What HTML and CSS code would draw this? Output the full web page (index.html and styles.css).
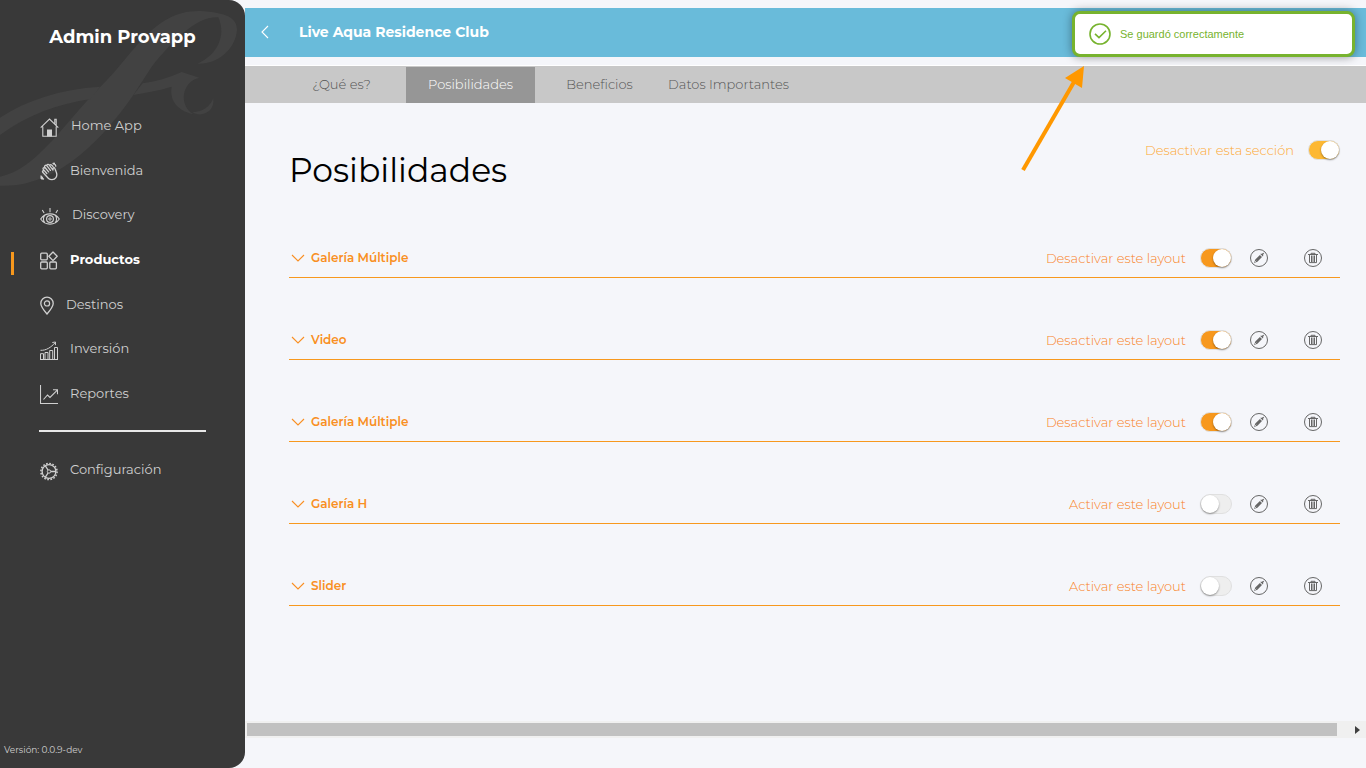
FILE: index.html
```html
<!DOCTYPE html>
<html lang="es">
<head>
<meta charset="UTF-8">
<meta name="viewport" content="width=device-width, initial-scale=1.0">
<title>Admin Provapp</title>
<link rel="stylesheet" href="styles.css">
</head>
<body>

<!-- Shared icons -->
<svg class="sprite" aria-hidden="true">
  <symbol id="chevron" viewBox="0 0 14 8">
    <path d="M1 1l6 6 6-6" fill="none" stroke="currentColor" stroke-width="1.1"/>
  </symbol>
  <symbol id="edit" viewBox="0 0 18 18">
    <circle cx="9" cy="9" r="8.5" fill="none" stroke="currentColor"/>
    <path d="M4 14l1.3-3.4 4.6-4.6 2.1 2.1-4.6 4.6zM10.3 5l.8-.6.6.5 1.500-1.200.9.9-1.200 1.500.5.6-.6.8z" fill="currentColor"/>
    <path d="M4.9 13.1l1.400-1.400" stroke="#f5f6fa" stroke-width=".7"/>
  </symbol>
  <symbol id="trash" viewBox="0 0 18 18">
    <circle cx="9" cy="9" r="8.5" fill="none" stroke="currentColor"/>
    <path d="M4 5.5h10M7 5.2V4.3h4v.9M5.5 6v7.6h7V6M7.5 6.5v6.5M9 6.5v6.5M10.5 6.5v6.5" fill="none" stroke="currentColor" stroke-width="1"/>
  </symbol>
</svg>

<div class="app">
  <aside class="sidebar">
    <svg class="watermark" viewBox="0 0 735 570" aria-hidden="true">
      <path d="M0 530C110 510 200 360 300 262C400 165 460 30 600 33C680 37 712 55 711 90C706 150 650 194 593 191C650 165 680 110 655 52C590 48 520 120 455 200L400 285C320 400 180 565 0 557Z"/>
      <path d="M0 353C80 300 180 268 300 260L272 297C180 310 80 345 0 405Z"/>
      <path d="M428 250C470 244 510 232 545 216L598 233C545 245 535 315 580 343C530 330 508 300 515 260C475 272 440 278 400 285Z"/>
      <path d="M640 295C645 340 600 352 578 337C610 335 630 320 640 295Z"/>
    </svg>
    <h1 class="brand">Admin Provapp</h1>
    <nav>
      <ul class="menu">
        <li><a href="#">
          <svg width="19" height="19" viewBox="0 0 19 19"><path d="M.7 9.7L9.5 1l8.8 8.7M14.8 5.5V1.2h1.4v6M2.8 8.5v9.8h13.4V8.5" fill="none" stroke="currentColor" stroke-width="1.1"/><path d="M7 18.5v-7h5v7z" fill="currentColor"/></svg>
          Home App</a></li>
        <li><a href="#">
          <svg width="18" height="19" viewBox="0 0 18 19"><g fill="none" stroke="currentColor" stroke-width="1.3" stroke-linecap="round" stroke-linejoin="round"><path d="M8.500 16.500L2.800 10.300M6.800 11.500L3.300 7.400M8.600 9.900L4.600 5M10.400 8.400L6.800 3.600M2.800 10.300c-.8-1.300.2-2 .9-1.500M3.300 7.400c-.7-1.300.4-2.300 1.300-1.400M4.600 5c-.4-1.500 1-2.200 2.200-1.400.2-1.500 1.700-1.600 2.500-.5l3.700 5V6.500c.5-1.200 1.700-.9 2 .2l1.500 4c1.200 4-1.200 6.800-4.500 7-1.500 0-2.700-.5-3.500-1.200"/><path d="M9.800 3.100c1-.8 1.900-.3 2.500.6l.7 1M13 1.500l1.300.6M15.300 2.700l.5 1.500M1 14l.5 1.200M2 16.600l1.500.4"/></g><circle cx="14" cy="1.500" r="1.100" fill="currentColor"/><circle cx="1.800" cy="16" r="1.400" fill="currentColor"/></svg>
          Bienvenida</a></li>
        <li><a href="#">
          <svg width="20" height="19" viewBox="0 0 20 19"><path d="M.7 12C5.2 5.2 14.8 5.2 19.3 12C14.8 18.8 5.2 18.8.7 12ZM10 1v4.2M2.3 3l1.8 3M17.7 3l-1.8 3M4.7 8.3c-1.7 2.6-1.7 5 0 7.4M15.3 8.3c1.7 2.6 1.7 5 0 7.4" fill="none" stroke="currentColor" stroke-width="1.1"/><circle cx="10" cy="12" r="3.4" fill="none" stroke="currentColor" stroke-width="1.2"/><circle cx="10" cy="12" r="1.2" fill="none" stroke="currentColor"/></svg>
          Discovery</a></li>
        <li class="active"><a href="#">
          <svg width="18" height="19" viewBox="0 0 18 19"><g fill="none" stroke="currentColor" stroke-width="1.3"><rect x=".7" y="2.2" width="6.6" height="6.6" rx="1"/><rect x=".7" y="11" width="6.6" height="6.8" rx="1"/><rect x="9.8" y="11" width="6.6" height="6.8" rx="1"/><path d="M13 1l4.2 4.3L13 9.6 8.8 5.3z" stroke-linejoin="round"/></g></svg>
          Productos</a></li>
        <li><a href="#">
          <svg width="14" height="19" viewBox="0 0 14 19"><path d="M7 18C3.5 13.8.8 10.5.8 7.4a6.2 6.2 0 0 1 12.4 0C13.2 10.5 10.5 13.8 7 18z" fill="none" stroke="currentColor" stroke-width="1.3"/><circle cx="7" cy="7.4" r="2.6" fill="none" stroke="currentColor" stroke-width="1.2"/></svg>
          Destinos</a></li>
        <li><a href="#">
          <svg width="18" height="19" viewBox="0 0 18 19"><path d="M.5 18.5v-5.8h3v5.8zM5 18.5v-7h3v7zM9.7 18.5v-9h3v9zM14.5 18.5v-12h3v12zM0 18.5h18M.5 9.3C6 9.6 11 6.5 15.3 1.5M12.3 1.5l3.2-.5-.1 3.2" fill="none" stroke="currentColor"/></svg>
          Inversión</a></li>
        <li><a href="#">
          <svg width="18" height="19" viewBox="0 0 18 19"><path d="M.5 0v18.5H18M3.5 14.5l4-4.5 2.5 2.5 7.3-7.3M13 4.8h4.5v4.500" fill="none" stroke="currentColor" stroke-width="1.1"/></svg>
          Reportes</a></li>
      </ul>
      <hr class="divider">
      <ul class="menu settings">
        <li><a href="#">
          <svg width="18" height="19" viewBox="0 0 18 19"><circle cx="9" cy="9.5" r="8.1" fill="none" stroke="currentColor" stroke-width="1.5" stroke-dasharray="1.7 1.48"/><circle cx="9" cy="9.5" r="6.9" fill="none" stroke="currentColor" stroke-width="1.3"/><circle cx="9" cy="9.5" r="1.7" fill="none" stroke="currentColor"/><path d="M10.8 9.5H16M8 8L5.4 3.8M8 11l-2.6 4.2" stroke="currentColor" stroke-width="1.3"/></svg>
          Configuración</a></li>
      </ul>
    </nav>
    <p class="version">Versión: 0.0.9-dev</p>
  </aside>

  <main class="main">
    <header class="topbar">
      <button class="back" aria-label="Regresar">
        <svg width="9" height="14" viewBox="0 0 9 14"><path d="M8 1L2 7l6 6" fill="none" stroke="currentColor" stroke-width="1.1"/></svg>
      </button>
      <h2>Live Aqua Residence Club</h2>
    </header>

    <nav class="tabs">
      <a href="#">¿Qué es?</a>
      <a href="#" class="selected">Posibilidades</a>
      <a href="#">Beneficios</a>
      <a href="#">Datos Importantes</a>
    </nav>

    <section class="content">
      <div class="section-head">
        <h3>Posibilidades</h3>
        <label class="toggle section-toggle">Desactivar esta sección <input type="checkbox" checked></label>
      </div>

      <ul class="layouts">
        <li>
          <button class="layout-name"><svg class="chevron"><use href="#chevron"/></svg>Galería Múltiple</button>
          <label class="toggle">Desactivar este layout <input type="checkbox" checked></label>
          <button class="icon-btn" aria-label="Editar"><svg><use href="#edit"/></svg></button>
          <button class="icon-btn" aria-label="Eliminar"><svg><use href="#trash"/></svg></button>
        </li>
        <li>
          <button class="layout-name"><svg class="chevron"><use href="#chevron"/></svg>Video</button>
          <label class="toggle">Desactivar este layout <input type="checkbox" checked></label>
          <button class="icon-btn" aria-label="Editar"><svg><use href="#edit"/></svg></button>
          <button class="icon-btn" aria-label="Eliminar"><svg><use href="#trash"/></svg></button>
        </li>
        <li>
          <button class="layout-name"><svg class="chevron"><use href="#chevron"/></svg>Galería Múltiple</button>
          <label class="toggle">Desactivar este layout <input type="checkbox" checked></label>
          <button class="icon-btn" aria-label="Editar"><svg><use href="#edit"/></svg></button>
          <button class="icon-btn" aria-label="Eliminar"><svg><use href="#trash"/></svg></button>
        </li>
        <li>
          <button class="layout-name"><svg class="chevron"><use href="#chevron"/></svg>Galería H</button>
          <label class="toggle">Activar este layout <input type="checkbox"></label>
          <button class="icon-btn" aria-label="Editar"><svg><use href="#edit"/></svg></button>
          <button class="icon-btn" aria-label="Eliminar"><svg><use href="#trash"/></svg></button>
        </li>
        <li>
          <button class="layout-name"><svg class="chevron"><use href="#chevron"/></svg>Slider</button>
          <label class="toggle">Activar este layout <input type="checkbox"></label>
          <button class="icon-btn" aria-label="Editar"><svg><use href="#edit"/></svg></button>
          <button class="icon-btn" aria-label="Eliminar"><svg><use href="#trash"/></svg></button>
        </li>
      </ul>
    </section>

    <div class="scrollbar" aria-hidden="true">
      <div class="thumb"></div>
      <svg width="5" height="8" viewBox="0 0 5 8"><path d="M0 0l5 4-5 4z" fill="#404040"/></svg>
    </div>
  </main>
</div>

<div class="toast" role="status">
  <svg width="22" height="22" viewBox="0 0 22 22"><circle cx="11" cy="11" r="10" fill="none" stroke="currentColor" stroke-width="1.6"/><path d="M6 10.8l4 3.800 7-6.800" fill="none" stroke="currentColor" stroke-width="1.6"/></svg>
  Se guardó correctamente
</div>

<svg class="pointer" width="64" height="106" viewBox="0 0 64 106" aria-hidden="true">
  <path d="M2 104L53 16" stroke="#ff9800" stroke-width="4"/>
  <path d="M63 0L44 12l17 10z" fill="#ff9800"/>
</svg>

</body>
</html>
```
FILE: styles.css
```css
* {
  box-sizing: border-box;
}

body {
  margin: 0;
  font-family: Montserrat, Inter, sans-serif;
  font-size: 13px;
  line-height: 20px;
  background: #f5f6fa;
}

h1, h2, h3, p, ul {
  margin: 0;
  padding: 0;
}

ul {
  list-style: none;
}

a {
  color: inherit;
  text-decoration: none;
}

button {
  font: inherit;
  padding: 0;
  border: none;
  background: none;
  cursor: pointer;
}

svg {
  display: block;
  flex: none;
}

.sprite {
  position: absolute;
  width: 0;
  height: 0;
}

.app {
  display: flex;
  min-height: 100vh;
}

/* Sidebar */
.sidebar {
  position: relative;
  display: flex;
  flex-direction: column;
  flex: none;
  width: 245px;
  padding: 25px 0 8px;
  border-radius: 0 16px 16px 0;
  background: #393939;
  color: #d0d0d0;
  overflow: hidden;
}

.watermark {
  position: absolute;
  top: 0;
  left: 0;
  width: 100%;
  fill: #424242;
}

.brand {
  position: relative;
  margin-bottom: 55px;
  font-size: 18px;
  line-height: 24px;
  text-align: center;
  color: #fff;
}

.sidebar nav {
  position: relative;
}

.menu {
  display: grid;
  grid-auto-rows: 1fr;
  min-height: 312px;
}

.menu a {
  display: flex;
  align-items: center;
  gap: 12px;
  height: 100%;
  padding: 0 0 2px 40px;
}

.menu svg {
  margin-top: 4px;
}

.menu .active {
  color: #fff;
  font-weight: 700;
  background: linear-gradient(#f7981d, #f7981d) 11px 65% / 3px 23px no-repeat;
}

.menu .active svg {
  color: #d0d0d0;
}

.menu.settings {
  min-height: 44px;
}

.divider {
  margin: 14px 39px 16px;
  border: none;
  border-top: 2px solid #e8e8e8;
}

.version {
  margin-top: auto;
  padding-left: 4px;
  font-size: 9px;
}

/* Main area */
.main {
  display: flex;
  flex-direction: column;
  flex: 1;
  min-width: 0;
  padding: 8px 0 30px;
}

.topbar {
  display: flex;
  align-items: center;
  gap: 30px;
  min-height: 49px;
  padding: 0 0 2px 15px;
  background: #69bbda;
  color: #fff;
}

.topbar h2 {
  font-size: 14px;
  font-weight: 700;
}

.back {
  color: #fff;
}

.tabs {
  display: flex;
  margin-top: 8px;
  padding-left: 32px;
  border-top: 1px solid #fff;
  background: #c8c8c8;
  color: #555;
  font-weight: 300;
}

.tabs a {
  width: 129px;
  padding: 7px 0 9px;
  border-top: 1px solid #c8c8c8;
  text-align: center;
}

.tabs .selected {
  background: #969696;
  color: #fff;
}

.content {
  padding: 37px 26px 0 44px;
}

.section-head {
  display: flex;
  justify-content: space-between;
  align-items: flex-start;
}

.section-head h3 {
  padding-top: 6px;
  font-size: 33px;
  font-weight: 400;
  line-height: 48px;
}

.layouts {
  padding-top: 2px;
}

.layouts li {
  display: flex;
  align-items: center;
  min-height: 38px;
  margin-top: 44px;
  padding: 0 18px 1px 0;
  border-bottom: 1px solid #f7981d;
}

.layout-name {
  display: flex;
  align-items: center;
  gap: 6px;
  margin-right: auto;
  padding-left: 2px;
  font-size: 12px;
  font-weight: 600;
  color: #f98f22;
}

.chevron {
  width: 14px;
  height: 8px;
}

.toggle {
  display: flex;
  align-items: center;
  gap: 14px;
  font-weight: 300;
  color: #f9821e;
}

.toggle input {
  appearance: none;
  display: flex;
  width: 32px;
  height: 20px;
  margin: 0;
  border: 1px solid #e0e0e0;
  border-radius: 10px;
  background: #eee;
  cursor: pointer;
}

.toggle input::before {
  content: "";
  width: 18px;
  height: 18px;
  border-radius: 50%;
  background: #fff;
  box-shadow: 0 1px 2px rgba(0, 0, 0, 0.4);
}

.toggle input:checked {
  justify-content: flex-end;
  background: #f7981d;
}

.section-toggle {
  color: #fda833;
}

.section-toggle input:checked {
  background: #fdb833;
}

.icon-btn {
  margin-left: 18px;
  color: #666;
}

.icon-btn + .icon-btn {
  margin-left: 36px;
}

.icon-btn svg {
  width: 18px;
  height: 18px;
}

.scrollbar {
  display: flex;
  align-items: center;
  gap: 18px;
  margin-top: auto;
  padding: 2px 6px 2px 2px;
  background: #f0f0f0;
}

.thumb {
  flex: 1;
  height: 13px;
  background: #c1c1c1;
}

/* Notification */
.toast {
  position: absolute;
  top: 11px;
  right: 11px;
  display: flex;
  align-items: center;
  gap: 9px;
  width: 283px;
  min-height: 46px;
  padding: 0 14px;
  border: 3px solid #77b32e;
  border-radius: 8px;
  background: #fff;
  box-shadow: 0 0 10px rgba(0, 0, 0, 0.4);
  font-family: "Liberation Sans", Arial, sans-serif;
  font-size: 11px;
  color: #77b32e;
}

.pointer {
  position: absolute;
  top: 66px;
  right: 281px;
}
```
